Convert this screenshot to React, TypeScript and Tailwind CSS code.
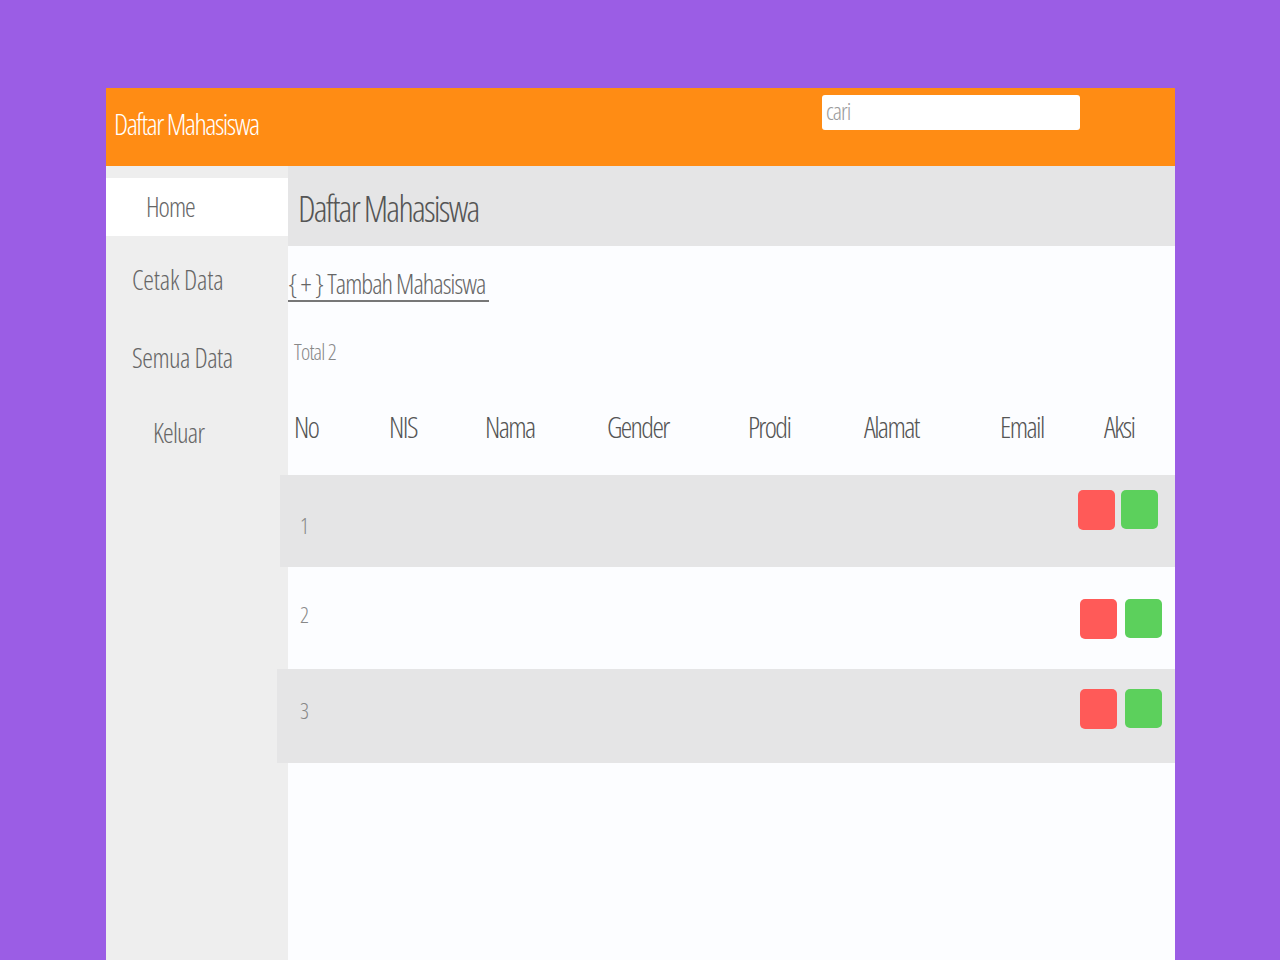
const font = "font-['Open_Sans','DejaVu_Sans',sans-serif] font-stretch-condensed font-light";

const columns = ["No", "NIS", "Nama", "Gender", "Prodi", "Alamat", "Email", "Aksi"];

const rows = [
  { no: "1", rowClass: "h-[92px] bg-[#e5e5e6] -ml-[8px] pl-[8px]", numClass: "pt-[35px]", btnClass: "pt-[15px] gap-[6px] pr-[17px]" },
  { no: "2", rowClass: "h-[102px] bg-[#fcfdff]", numClass: "pt-[32px]", btnClass: "pt-[32px] gap-[8px] pr-[13px]" },
  { no: "3", rowClass: "h-[94px] bg-[#e5e5e6] -ml-[11px] pl-[11px]", numClass: "pt-[26px]", btnClass: "pt-[20px] gap-[8px] pr-[13px]" },
];

export default function App() {
  return (
    <div className={`min-h-screen bg-[#9b5de5] pt-[88px] pl-[106px] pr-[105px] ${font}`}>
      <div className="flex h-[872px] flex-col overflow-hidden">
        {/* Header */}
        <div className="flex h-[78px] shrink-0 bg-[#ff8c14]">
          <div className="w-[716px] pl-[8px] pt-[18px] text-[29px] leading-[36px] tracking-[-1.5px] text-white">
            Daftar Mahasiswa
          </div>
          <div className="pt-[7px]">
            <input
              type="text"
              placeholder="cari"
              className="h-[35px] w-[258px] rounded-[3px] bg-white px-[4px] pb-[4px] text-[24px] tracking-[-1px] text-gray-700 placeholder:text-[#9a9a9a] focus:outline-none"
            />
          </div>
        </div>

        <div className="flex flex-1">
          {/* Sidebar */}
          <div className="w-[182px] shrink-0 bg-[#eeeeee] pt-[12px] text-[27px] tracking-[-0.8px] text-[#666]">
            <div className="flex h-[58px] items-center bg-white pl-[40px] tracking-[-1px]">Home</div>
            <div className="mt-[18px] flex h-[52px] items-center pl-[26px] tracking-[-0.2px]">Cetak Data</div>
            <div className="mt-[26px] flex h-[52px] items-center pl-[26px] tracking-[-0.5px]">Semua Data</div>
            <div className="mt-[23px] flex h-[52px] items-center pl-[47px]">Keluar</div>
          </div>

          {/* Main */}
          <div className="relative flex-1 bg-[#fcfdff]">
            <div className="flex h-[80px] items-center bg-[#e5e5e6] pl-[10px] pt-[5px] text-[36px] tracking-[-1.8px] text-[#555]">
              Daftar Mahasiswa
            </div>

            <div className="pt-[22px]">
              <a href="#" className="inline-block border-b-2 border-[#777] pr-[4px] text-[27px] leading-[32px] tracking-[-1px] text-[#666]">
                {"{ + } Tambah Mahasiswa"}
              </a>
            </div>

            <div className="pl-[6px] pt-[34px] text-[22px] leading-[30px] tracking-[-0.8px] text-[#888]">Total 2</div>

            <div className="grid h-[109px] grid-cols-[95px_96px_122px_141px_116px_136px_104px_1fr] items-center pl-[6px] pt-[12px] text-[29px] tracking-[-1.6px] text-[#555]">
              {columns.map((c) => (
                <div key={c}>{c}</div>
              ))}
            </div>

            {rows.map((r) => (
              <div key={r.no} className={`flex justify-between ${r.rowClass}`}>
                <div className={`pl-[12px] text-[22px] leading-[30px] text-[#888] ${r.numClass}`}>{r.no}</div>
                <div className={`flex items-start ${r.btnClass}`}>
                  <button className="h-[40px] w-[37px] rounded-[5px] bg-[#ff5a58]" />
                  <button className="h-[39px] w-[37px] rounded-[5px] bg-[#5cd05c]" />
                </div>
              </div>
            ))}
          </div>
        </div>
      </div>
    </div>
  );
}
